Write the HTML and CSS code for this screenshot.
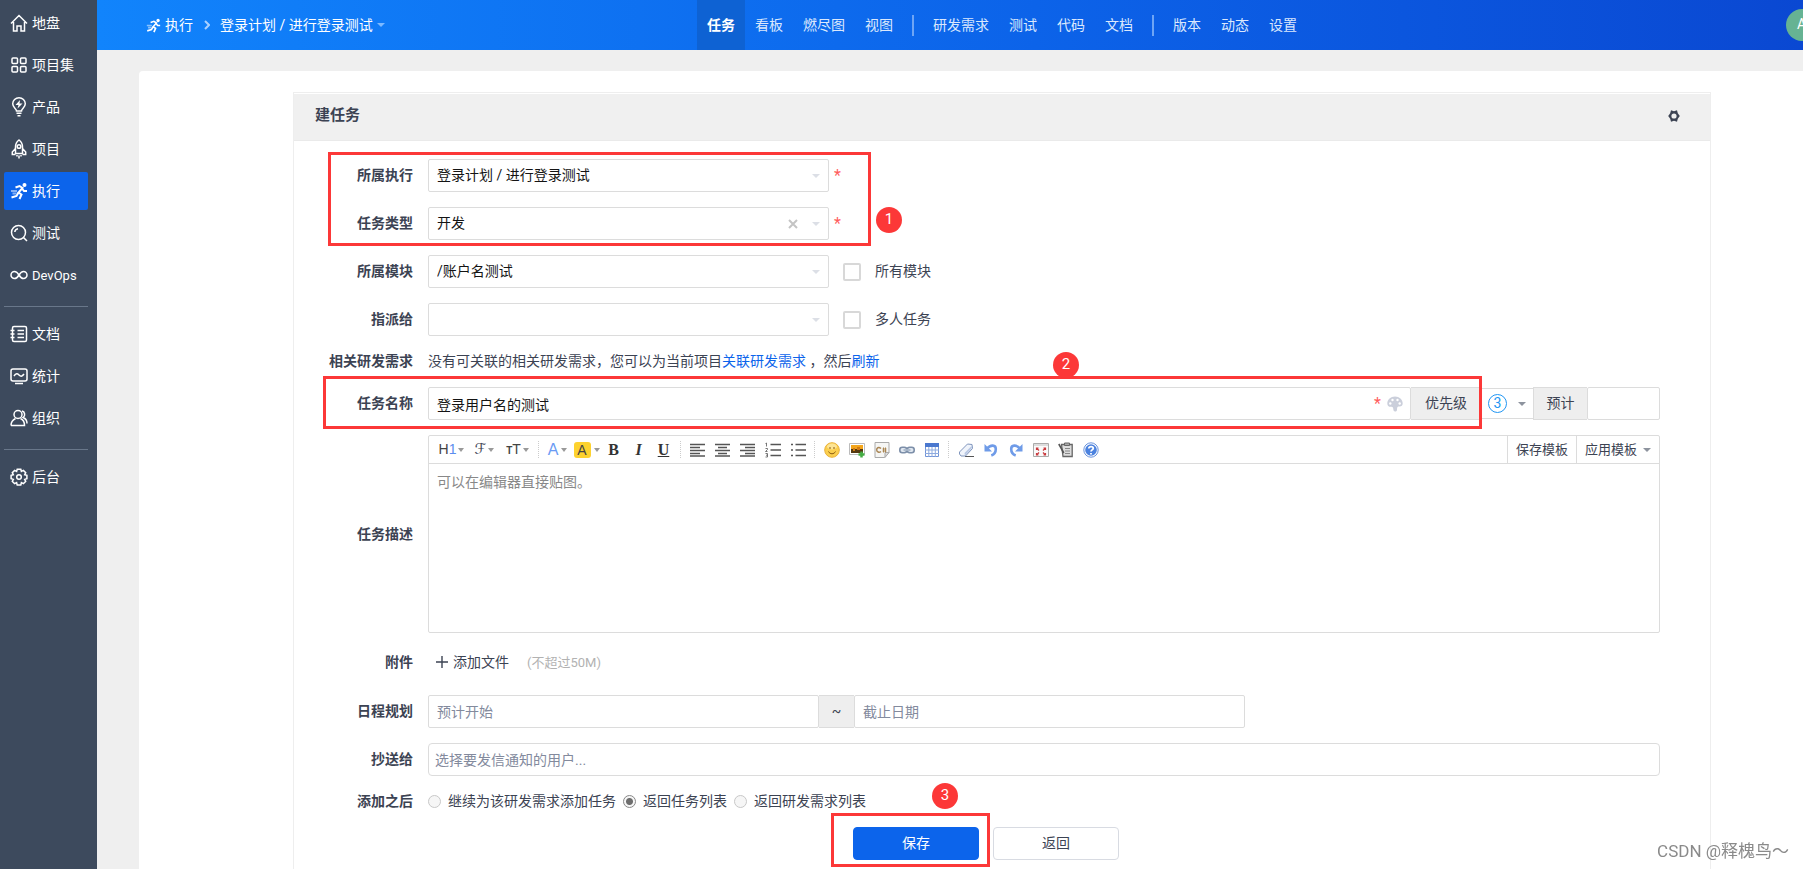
FILE: index.html
```html
<!DOCTYPE html>
<html lang="zh-CN">
<head>
<meta charset="utf-8">
<title>建任务</title>
<link rel="stylesheet" href="styles.css">
</head>
<body>
<div class="app">
  <aside class="sidebar">
    <nav class="menu">
      <a class="menu-item" href="#"><svg class="menu-icon" viewBox="0 0 18 18"><path d="M1 9.500 9 1.500l8 8M3.500 8v9H7v-5h4v5h3.500V8"/></svg>地盘</a>
      <a class="menu-item" href="#"><svg class="menu-icon" viewBox="0 0 18 18"><rect x="2" y="2" width="5.500" height="5.500" rx="1"/><rect x="10.500" y="2" width="5.500" height="5.500" rx="1"/><rect x="2" y="10.500" width="5.500" height="5.500" rx="1"/><rect x="10.500" y="10.500" width="5.500" height="5.500" rx="1"/></svg>项目集</a>
      <a class="menu-item" href="#"><svg class="menu-icon tall" viewBox="0 0 18 20"><path d="M6.500 14C6.500 11.500 2.700 10.500 2.700 6.800a6.300 6 0 0 1 12.600 0C15.300 10.500 11.500 11.500 11.500 14zM6.500 16.300h5M7.500 18.800h3"/><path class="solid" d="m10 3-4.500 5h3L7.500 11.500l5-5h-3z"/></svg>产品</a>
      <a class="menu-item" href="#"><svg class="menu-icon tall" viewBox="0 0 18 20"><path d="M5.500 14.500V8C5.500 4.500 7 2.500 9 1c2 1.500 3.500 3.500 3.500 7v6.500zM5.500 9.500 2.300 13v2.500h3.200M12.500 9.500l3.200 3.500v2.500h-3.200M9 16.500v3M7 16v1.500M11 16v1.500"/><circle cx="9" cy="7.500" r="1.800"/></svg>项目</a>
      <a class="menu-item active" href="#"><svg class="menu-icon run" viewBox="0 0 18 18"><circle class="solid" cx="14.500" cy="3" r="2"/><path d="M5.500 5.500 9.500 4l3 2-4 4.500 3 2-2 4.500M8.500 10.500 6.500 14l-5 1.500M12 6.500l2 2.500h3"/><path class="faint" d="M1 9h6M2.500 11.500h4"/></svg>执行</a>
      <a class="menu-item" href="#"><svg class="menu-icon" viewBox="0 0 18 18"><circle cx="8.500" cy="8.500" r="7"/><path d="m13.500 13.500 3.500 3.500M4.800 8A3.800 3.800 0 0 1 8 4.800"/></svg>测试</a>
      <a class="menu-item latin" href="#"><svg class="menu-icon" viewBox="0 0 18 18"><path d="M9 9C7.500 6.500 6 5.500 4.500 5.500a3.500 3.500 0 0 0 0 7C6 12.500 7.500 11.500 9 9s3-3.500 4.500-3.500a3.500 3.500 0 0 1 0 7C12 12.500 10.500 11.500 9 9z"/></svg>DevOps</a>
      <hr class="menu-line">
      <a class="menu-item" href="#"><svg class="menu-icon" viewBox="0 0 18 18"><rect x="2.500" y="1.500" width="14" height="15" rx="1.500"/><path d="M7.500 5.500H14M7.500 9H14M7.500 12.500H14M.5 5.500h4M.5 9h4M.5 12.500h4"/></svg>文档</a>
      <a class="menu-item" href="#"><svg class="menu-icon" viewBox="0 0 18 18"><rect x="1" y="2" width="16" height="12" rx="2"/><path d="M4 9c2-3 3.500-2.500 5-1s3 2 5-1M5 16.500h8"/></svg>统计</a>
      <a class="menu-item" href="#"><svg class="menu-icon" viewBox="0 0 18 18"><circle cx="8" cy="5.500" r="4"/><path d="M1 16.500c0-4 2.500-6 4.500-7M10.500 9.500c2.500 1 4 3.500 4 7H1M12 2c3 .5 3.500 5 1.200 6.500 2.300 1 3.800 3 3.800 6"/></svg>组织</a>
      <hr class="menu-line">
      <a class="menu-item" href="#"><svg class="menu-icon" viewBox="0 0 18 18"><path d="m7.200 1.200h3.600l.6 2.200 2-1 2.300 2.300-1 2 2.200.6v3.500l-2.200.6 1 2-2.300 2.300-2-1-.6 2.200H7.200l-.6-2.200-2 1-2.300-2.300 1-2-2.200-.6V7.300l2.200-.6-1-2 2.300-2.300 2 1z"/><circle cx="9" cy="9" r="2.300"/></svg>后台</a>
    </nav>
  </aside>

  <div class="main">
    <header class="topbar">
      <div class="crumbs">
        <a class="crumb" href="#"><svg class="crumb-icon" viewBox="0 0 18 18"><circle class="solid" cx="14.500" cy="3" r="2"/><path d="M5.500 5.500 9.500 4l3 2-4 4.500 3 2-2 4.500M8.500 10.500 6.500 14l-5 1.500M12 6.500l2 2.500h3"/><path class="faint" d="M1 9h6M2.500 11.500h4"/></svg>执行</a>
        <svg class="chevron" viewBox="0 0 6 10"><path d="m1 1 4 4-4 4"/></svg>
        <a class="crumb" href="#">登录计划 / 进行登录测试<i class="caret light"></i></a>
      </div>
      <nav class="tabs">
        <a class="tab active" href="#">任务</a><a class="tab" href="#">看板</a><a class="tab" href="#">燃尽图</a><a class="tab" href="#">视图</a><span class="tab-line"></span><a class="tab" href="#">研发需求</a><a class="tab" href="#">测试</a><a class="tab" href="#">代码</a><a class="tab" href="#">文档</a><span class="tab-line"></span><a class="tab" href="#">版本</a><a class="tab" href="#">动态</a><a class="tab" href="#">设置</a>
      </nav>
      <span class="avatar">A</span>
    </header>

    <main class="panel">
      <section class="card">
        <div class="card-head">
          <h1 class="card-title">建任务</h1>
          <button class="icon-btn" type="button" aria-label="设置"><svg class="gear" viewBox="0 0 12 12"><path d="M3 .3 6 1.300 9 .3l.8 3 2 2.700-2 2.700-.8 3-3-1-3 1-.8-3L.2 6l2-2.700zM6 3.400a2.600 2.600 0 1 0 0 5.200 2.600 2.600 0 0 0 0-5.200z"/></svg></button>
        </div>

        <form class="form">
          <div class="group marked">
            <div class="row">
              <label class="label" for="execution">所属执行</label>
              <div class="cell">
                <span class="picker"><select class="control" id="execution"><option>登录计划 / 进行登录测试</option></select><i class="caret pale"></i></span>
                <span class="star">*</span>
              </div>
            </div>
            <div class="row">
              <label class="label" for="type">任务类型</label>
              <div class="cell">
                <span class="picker"><select class="control" id="type"><option>开发</option></select><button class="clear" type="button" aria-label="清除"><svg viewBox="0 0 10 10"><path d="m1 1 8 8M9 1 1 9"/></svg></button><i class="caret pale"></i></span>
                <span class="star">*</span>
              </div>
            </div>
            <span class="frame frame-one"></span><span class="badge badge-one">1</span>
          </div>

          <div class="row">
            <label class="label" for="module">所属模块</label>
            <div class="cell">
              <span class="picker"><select class="control" id="module"><option>/账户名测试</option></select><i class="caret pale"></i></span>
              <label class="check"><input type="checkbox">所有模块</label>
            </div>
          </div>
          <div class="row">
            <label class="label" for="assignee">指派给</label>
            <div class="cell">
              <span class="picker"><select class="control" id="assignee"><option></option></select><i class="caret pale"></i></span>
              <label class="check"><input type="checkbox">多人任务</label>
            </div>
          </div>
          <div class="row">
            <span class="label">相关研发需求</span>
            <p class="note">没有可关联的相关研发需求，您可以为当前项目<a href="#">关联研发需求</a> ，然后<a href="#">刷新</a></p>
          </div>

          <div class="row">
            <label class="label" for="name">任务名称</label>
            <div class="joined">
              <div class="name-part">
                <span class="name-box">
                  <input class="control" id="name" type="text" value="登录用户名的测试">
                  <span class="name-tools"><span class="star">*</span><button class="icon-btn" type="button" aria-label="颜色"><svg class="palette" viewBox="0 0 16 16"><path d="M8 .5C3.700.5.3 3.700.3 7.500c0 2.500 1.500 3.300 3.200 3.300 1.500 0 2.500.2 2.700 1.700.2 1.700.5 3 2 3 1.200 0 1.800-.8 1.800-1.800 0-2.700.5-3.200 2.500-3.200 2 0 3.200-1 3.200-3C15.700 3.500 12.300.5 8 .5z"/><g fill="#fff"><circle cx="3.300" cy="7.500" r="1.200"/><circle cx="5.500" cy="4" r="1.200"/><circle cx="10.500" cy="4" r="1.200"/><circle cx="12.700" cy="7.500" r="1.200"/></g></svg></button></span>
                </span>
                <span class="addon addon-pri">优先级</span>
                <span class="frame frame-two"></span><span class="badge badge-two">2</span>
              </div>
              <button class="pri" type="button" aria-haspopup="listbox"><span class="pri-num">3</span><i class="caret"></i></button>
              <label class="addon addon-est" for="estimate">预计</label>
              <input class="control estimate" id="estimate" type="text">
            </div>
          </div>

          <div class="row">
            <label class="label" for="desc">任务描述</label>
            <div class="editor">
              <div class="toolbar">
                <button class="tool wide" type="button"><span class="t-head">H<span class="t-one">1</span></span><i class="caret small"></i></button>
                <button class="tool wide" type="button"><span class="t-script">ℱ</span><i class="caret small"></i></button>
                <button class="tool wide" type="button"><span class="t-size"><small>T</small>T</span><i class="caret small"></i></button>
                <span class="tool-line"></span>
                <button class="tool fore" type="button"><span class="t-fore">A</span><i class="caret small"></i></button>
                <button class="tool fore" type="button"><span class="t-back">A</span><i class="caret small"></i></button>
                <button class="tool serif" type="button"><b>B</b></button>
                <button class="tool serif" type="button"><b><i>I</i></b></button>
                <button class="tool serif" type="button"><b><u>U</u></b></button>
                <span class="tool-line"></span>
                <button class="tool" type="button" aria-label="左对齐"><svg class="bars" viewBox="0 0 16 16"><path d="M0 2.500h15M0 5.500h10M0 8.500h15M0 11.500h10M0 14h15"/></svg></button>
                <button class="tool" type="button" aria-label="居中"><svg class="bars" viewBox="0 0 16 16"><path d="M0 2.500h15M3 5.500h9M0 8.500h15M3 11.500h9M0 14h15"/></svg></button>
                <button class="tool" type="button" aria-label="右对齐"><svg class="bars" viewBox="0 0 16 16"><path d="M0 2.500h15M5 5.500h10M0 8.500h15M5 11.500h10M0 14h15"/></svg></button>
                <button class="tool" type="button" aria-label="编号"><svg class="bars" viewBox="0 0 16 16"><path d="M5.500 2.500H16M5.500 8H16M5.500 13.500H16"/><path class="thin" d="M.5 1.500 1.500 1v3.500M.5 6.500h2v1L.5 9.500h2M.5 11.500h2v3.500h-2M1 13.200h1.500"/></svg></button>
                <button class="tool" type="button" aria-label="列表"><svg class="bars" viewBox="0 0 16 16"><path d="M5.500 2.500H16M5.500 8H16M5.500 13.500H16M1 2.500h2M1 8h2M1 13.500h2"/></svg></button>
                <span class="tool-line"></span>
                <button class="tool" type="button" aria-label="表情"><svg viewBox="0 0 16 16"><circle cx="8" cy="8" r="7.300" fill="#fbcf4e" stroke="#e9b13a"/><ellipse cx="8" cy="4.500" rx="5" ry="3" fill="#fde596"/><path d="M6 5v2M10 5v2M4.500 9.500c1.500 3 5.500 3 7 0" fill="none" stroke="#8a5a10"/></svg></button>
                <button class="tool" type="button" aria-label="图片"><svg viewBox="0 0 16 16"><path fill="#fff" stroke="#bbb" d="M.5 1.500h15v11H.5z"/><path fill="#f3a51c" d="M2 3h12v4H2z"/><path fill="#54380f" d="M2 7h12v4H2z"/><path fill="#d07912" d="M4 6h2v3H4zM8 5h3v3H8z"/><path stroke="#44ad43" stroke-width="2.500" d="M12.500 9.500v6M9.500 12.500h6"/></svg></button>
                <button class="tool" type="button" aria-label="代码"><svg viewBox="0 0 16 16"><path fill="#f6f6f4" stroke="#aaa" d="M1 .5h14v10l-4.500 5H1z"/><path fill="#ddd" stroke="#aaa" d="M15 10.500h-4v5z"/><path fill="none" stroke="#a98655" stroke-width="1.500" d="M7 6.500C4.500 4.500 2.500 6 2.700 8S5 11 7 9.500"/><path fill="none" stroke="#a98655" d="M9.500 5.500v5M11.500 5.500v5M8.500 7h4M8.500 9h4"/></svg></button>
                <button class="tool" type="button" aria-label="链接"><svg viewBox="0 0 16 16"><rect x=".8" y="5.200" width="7" height="5.500" rx="2.500" fill="#dfe6ef" stroke="#7d8fa9" stroke-width="1.600"/><rect x="8.200" y="5.200" width="7" height="5.500" rx="2.500" fill="#dfe6ef" stroke="#7d8fa9" stroke-width="1.600"/><path stroke="#a9b7ca" stroke-width="1.800" d="M4.500 8h7"/></svg></button>
                <button class="tool" type="button" aria-label="表格"><svg viewBox="0 0 16 16"><path fill="#fff" stroke="#7193d6" d="M1.500 1.500h13v13h-13z"/><path fill="#4a78cf" d="M1 1h14v4H1z"/><path stroke="#8eabe0" d="M1 8h14M1 11.500h14M4.800 5v10M8 5v10M11.300 5v10"/></svg></button>
                <span class="tool-line"></span>
                <button class="tool" type="button" aria-label="清除格式"><svg viewBox="0 0 16 16"><path stroke="#555" d="M7 14.500h9"/><path fill="#f0f4fb" stroke="#7f95bd" d="m9.500 2 4.500.5.5 4-7 7.500H3L1.500 12v-2z"/><path fill="#b9c8e4" d="m14 6-7 7.500-.5-2.500 7-7z"/></svg></button>
                <button class="tool" type="button" aria-label="撤销"><svg viewBox="0 0 16 16"><path fill="none" stroke="#6f9be8" stroke-width="2.600" d="M3.500 7C8 2 12.800 3 12.800 7c0 3-1.800 5.500-4.500 6.500"/><path fill="#6f9be8" d="M1.500 2v7.500H9z"/></svg></button>
                <button class="tool" type="button" aria-label="重做"><svg viewBox="0 0 16 16"><path fill="none" stroke="#6f9be8" stroke-width="2.600" d="M12.500 7C8 2 3.200 3 3.200 7c0 3 1.800 5.500 4.500 6.500"/><path fill="#6f9be8" d="M14.500 2v7.500H7z"/></svg></button>
                <button class="tool" type="button" aria-label="全屏"><svg viewBox="0 0 16 16"><path fill="#fafafa" stroke="#aaa" d="M.5 1.500h15v13H.5z"/><path fill="#ddd" d="M1 2h14v2H1z"/><path fill="none" stroke="#c93a3e" stroke-width="1.200" d="M3.500 8V6h2M4 6.500l2 2M12.500 8V6h-2M12 6.500l-2 2M3.500 11v2h2M4 12.500l2-2M12.500 11v2h-2M12 12.500l-2-2"/></svg></button>
                <button class="tool" type="button" aria-label="粘贴"><svg viewBox="0 0 16 16"><path fill="#ddd" stroke="#666" stroke-width="1.300" d="M3.500 2.500h10.700v12H5z"/><path fill="#aaa" stroke="#666" d="M6.500 1h5v2.500h-5z"/><path stroke="#888" d="M7 6.500h5M7 9h5M7 11.500h5"/><path stroke="#555" stroke-width="1.600" d="m.8 2 5 9"/></svg></button>
                <button class="tool" type="button" aria-label="帮助"><svg viewBox="0 0 16 16"><circle cx="8" cy="8" r="7.200" fill="#fff" stroke="#6a93dc"/><circle cx="8" cy="8" r="5.800" fill="#4b82df"/><path fill="none" stroke="#fff" stroke-width="1.800" d="M5.800 6.500C6 4 10.300 4 10.300 6.300 10.300 7.800 8 8 8 9.500M8 11v1.500"/></svg></button>
                <span class="templates">
                  <button class="template" type="button">保存模板</button>
                  <button class="template" type="button">应用模板<i class="caret"></i></button>
                </span>
              </div>
              <textarea class="editor-area" id="desc" placeholder="可以在编辑器直接贴图。"></textarea>
            </div>
          </div>

          <div class="row attach">
            <span class="label">附件</span>
            <div class="cell">
              <button class="add-file" type="button"><svg viewBox="0 0 12 12"><path d="M6 0v12M0 6h12"/></svg>添加文件</button>
              <span class="hint">(不超过50M)</span>
            </div>
          </div>

          <div class="row">
            <label class="label" for="begin">日程规划</label>
            <div class="joined dates">
              <input class="control" id="begin" type="text" placeholder="预计开始">
              <span class="addon addon-to">~</span>
              <input class="control" id="deadline" type="text" placeholder="截止日期" aria-label="截止日期">
            </div>
          </div>
          <div class="row">
            <label class="label" for="mailto">抄送给</label>
            <input class="control cc" id="mailto" type="text" placeholder="选择要发信通知的用户...">
          </div>
          <div class="row">
            <span class="label">添加之后</span>
            <div class="radios">
              <label class="radio"><input type="radio" name="after">继续为该研发需求添加任务</label>
              <label class="radio"><input type="radio" name="after" checked>返回任务列表</label>
              <label class="radio"><input type="radio" name="after">返回研发需求列表</label>
            </div>
          </div>
          <div class="actions">
            <span class="marked"><button class="btn primary" type="submit">保存</button><span class="frame frame-three"></span><span class="badge badge-three">3</span></span>
            <button class="btn" type="button">返回</button>
          </div>
        </form>
      </section>
    </main>
  </div>
</div>
<span class="watermark">CSDN @释槐鸟～</span>
</body>
</html>
```
FILE: styles.css
```css
* { box-sizing: border-box; }

body {
  margin: 0;
  overflow: hidden;
  background: #efefef;
  color: #3c4353;
  font: 14px/21px Roboto, "Noto Sans CJK SC", sans-serif;
}

button, input, select, textarea { margin: 0; font: inherit; color: inherit; }
button { padding: 0; border: 0; background: none; }
a { color: #0c64eb; text-decoration: none; }
svg { display: block; flex: none; }

.app { display: flex; height: 100vh; }

/* Sidebar */
.sidebar { flex: none; width: 97px; background: #3d4a5d; }
.menu { display: flex; flex-direction: column; gap: 4px; padding: 4px 9px 4px 4px; }
.menu-item {
  display: flex;
  align-items: center;
  gap: 4px;
  height: 38px;
  padding-left: 6px;
  border-radius: 2px;
  color: #fff;
}
.menu-item.active { background: #0c64eb; }
.menu-item.latin { font-size: 13px; }
.menu-icon, .crumb-icon { width: 18px; height: 18px; fill: none; stroke: #fff; stroke-width: 1.5; }
.menu-icon.tall { height: 20px; }
.menu-icon.run, .crumb-icon { stroke-width: 2; }
.crumb-icon { width: 15px; height: 15px; }
.menu-icon .solid, .crumb-icon .solid { fill: #fff; stroke: none; }
.faint { stroke-opacity: 0.5; }
.menu-line { width: 100%; height: 1px; margin: 8px 0 4px; border: 0; background: #69778a; }

/* Top bar */
.main { display: flex; flex: 1; flex-direction: column; min-width: 0; }
.topbar {
  display: flex;
  flex: none;
  align-items: center;
  height: 50px;
  padding-left: 49px;
  background: linear-gradient(90deg, #1184fc, #0c63e9 55%, #0a48d2);
}
.crumbs { display: flex; flex: none; align-items: center; width: 551px; }
.crumb { display: flex; align-items: center; gap: 4px; color: #fff; }
.chevron { width: 6px; height: 10px; margin: 0 10px 0 11px; fill: none; stroke: #a9d0ff; stroke-width: 2; }
.tabs { display: flex; flex: none; align-items: center; }
.tab { padding: 0 10px; line-height: 50px; color: #dbe8fd; }
.tab.active { background: #0e62d3; color: #fff; font-weight: 700; }
.tab-line { width: 2px; height: 21px; margin: 0 9px; background: #6ea5f5; }
.avatar {
  flex: none;
  width: 32px;
  height: 32px;
  margin: 0 -15px 0 auto;
  padding-left: 11px;
  border-radius: 50%;
  background: #66b393;
  color: #fff;
  line-height: 30px;
}

.caret {
  flex: none;
  border: 4px solid transparent;
  border-top-color: #8d939e;
  border-bottom-width: 0;
}
.caret.light { border-top-color: #7db9ff; }
.caret.pale { border-top-color: #dcdfe6; }
.caret.small { border-width: 4px 3px 0; border-top-color: #999; }

/* Card */
.panel {
  flex: 1;
  margin: 21px 0 0 42px;
  padding: 21px 92px 0 154px;
  border-radius: 4px 0 0;
  background: #fff;
}
.card { min-height: 100%; padding-top: 1px; border: 1px solid #eee; border-bottom: 0; }
.card-head {
  display: flex;
  align-items: center;
  justify-content: space-between;
  height: 47px;
  padding: 0 30px 3px 21px;
  border-bottom: 1px solid #eaeaea;
  background: #f0f0f0;
}
.card-title { margin: 0; font-size: 15px; font-weight: 700; line-height: 21px; }
.gear { width: 12px; height: 12px; fill: #3c4353; fill-rule: evenodd; }

/* Form */
.form, .group { display: flex; flex-direction: column; gap: 15px; }
.form { padding: 18px 50px 0 18px; }
.marked { position: relative; }
.row {
  display: grid;
  grid-template-columns: 101px minmax(0, 1fr);
  column-gap: 15px;
  align-items: center;
}
.label { font-weight: 700; text-align: right; white-space: nowrap; }
.cell { display: flex; align-items: center; }
.control {
  width: 100%;
  height: 33px;
  padding: 0 8px;
  border: 1px solid #dcdcdc;
  border-radius: 2px;
  outline: 0;
  background: #fff;
  color: #141414;
  appearance: none;
}
.control::placeholder { color: #838a9d; opacity: 1; }
.control.cc { padding: 0 6px; border-radius: 4px; }
.picker { position: relative; flex: none; width: 401px; height: 33px; }
.picker .caret { position: absolute; top: 15px; right: 9px; }
.clear { position: absolute; top: 12px; right: 31px; }
.clear svg { width: 10px; height: 10px; fill: none; stroke: #c4c4c4; stroke-width: 2; }
.star { margin-left: 5px; color: #ff5d5d; font-size: 16px; }
.check { display: flex; align-items: center; gap: 14px; margin-left: 14px; }
.check input {
  width: 18px;
  height: 18px;
  margin: 0;
  border: 2px solid #d8d8d8;
  border-radius: 2px;
  appearance: none;
}
.note { margin: 0; white-space: nowrap; }

.joined, .name-part { display: flex; align-items: center; }
.name-part { position: relative; flex: 1; }
.name-box { position: relative; flex: 1; height: 33px; }
.name-tools {
  position: absolute;
  top: 0;
  right: 8px;
  display: flex;
  align-items: center;
  gap: 6px;
  height: 33px;
}
.palette { width: 16px; height: 16px; fill: #cbcfdb; }
.addon {
  flex: none;
  height: 33px;
  border: 1px solid #dcdcdc;
  border-width: 1px 0;
  background: #eee;
  line-height: 31px;
  text-align: center;
}
.addon-pri { width: 70px; }
.addon-est { width: 54px; border-left-width: 1px; }
.addon-to { width: 35px; }
.estimate { flex: none; width: 73px; }
.pri { display: flex; flex: none; align-items: center; justify-content: center; gap: 11px; width: 52px; height: 31px; border: 1px solid #dcdcdc; border-width: 1px 0; }
.pri-num {
  width: 19px;
  height: 19px;
  border: 1px solid #2196f3;
  border-radius: 50%;
  color: #2196f3;
  line-height: 17px;
}
.dates { width: 817px; }

/* Rich text editor */
.editor { border: 1px solid #dcdcdc; border-radius: 2px; }
.toolbar { display: flex; align-items: center; height: 28px; padding-left: 6px; border-bottom: 1px solid #dcdcdc; }
.tool { display: flex; flex: none; align-items: center; justify-content: center; width: 25px; height: 24px; }
.tool.wide { gap: 2px; width: 33px; }
.tool.fore { gap: 3px; width: 29px; }
.tool svg { width: 16px; height: 16px; }
.tool.serif { font-family: "Liberation Serif", serif; font-size: 16px; color: #333; }
.tool-line { height: 17px; margin: 0 4px; border-left: 1px dotted #ccc; }
.t-head, .t-size, .t-fore, .t-back { font-family: "Liberation Sans", sans-serif; font-size: 14px; color: #444; }
.t-one { color: #5b8def; }
.t-size small { font-size: 10px; font-weight: 700; }
.t-script { font-family: "DejaVu Sans", sans-serif; font-size: 15px; }
.t-fore { font-size: 16px; color: #6a9bf4; }
.t-back { width: 17px; border-radius: 3px; background: #fdd22f; line-height: 16px; }
.bars { fill: none; stroke: #555; stroke-width: 1.4; }
.thin { stroke-width: 0.8; }
.templates { display: flex; margin-left: auto; font-size: 13px; }
.template { display: flex; align-items: center; gap: 6px; height: 27px; padding: 0 8px; border-left: 1px solid #dcdcdc; }
.editor-area {
  display: block;
  width: 100%;
  height: 168px;
  padding: 8px;
  border: 0;
  outline: 0;
  background: none;
  resize: none;
}
.editor-area::placeholder { color: #888; opacity: 1; }

.attach { height: 32px; padding-bottom: 4px; }
.add-file { display: flex; align-items: center; gap: 5px; padding-left: 8px; }
.add-file svg { width: 12px; height: 12px; stroke: #3c4353; stroke-width: 1.4; }
.hint { margin-left: 18px; color: #b2b2b2; font-size: 13px; }

.radios { display: flex; gap: 7px; }
.radio { display: flex; align-items: center; gap: 7px; }
.radio input {
  width: 13px;
  height: 13px;
  margin: 0;
  border: 1px solid #c8c8c8;
  border-radius: 50%;
  background: #f6f6f6;
  appearance: none;
}
.radio input:checked { border-color: #888; background: radial-gradient(#6d6d6d 0 3px, #f6f6f6 4px); }

.actions { display: flex; justify-content: center; gap: 14px; }
.btn { display: block; width: 126px; height: 33px; border: 1px solid #d8dbe2; border-radius: 4px; }
.btn.primary { border-color: #0c64eb; background: #0c64eb; color: #fff; }

/* Step marks */
.frame { position: absolute; border: 3px solid #fc3838; pointer-events: none; }
.frame-one { top: -7px; left: 16px; width: 543px; height: 94px; }
.frame-two { inset: -11px -1px -9px -105px; }
.frame-three { inset: -14px -11px -7px -22px; }
.badge {
  position: absolute;
  width: 26px;
  height: 26px;
  border-radius: 50%;
  background: #fc3838;
  color: #fff;
  font-size: 15px;
  line-height: 24px;
  text-align: center;
}
.badge-one { top: 48px; left: 564px; }
.badge-two { top: -35px; right: 402px; }
.badge-three { top: -44px; left: 79px; }

.watermark {
  position: fixed;
  right: 14px;
  bottom: 6px;
  color: #8a8a8a;
  font-size: 17px;
  line-height: 24px;
}
```
